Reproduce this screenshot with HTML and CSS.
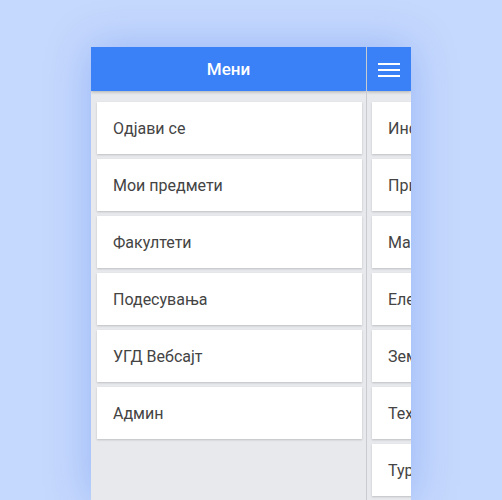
FILE: index.html
```html
<!DOCTYPE html>
<html lang="mk">
<head>
<meta charset="utf-8">
<link rel="stylesheet" href="styles.css">
</head>
<body>
<div class="frame">
  <div class="pane pane-left">
    <div class="header"><span class="title">Мени</span></div>
    <div class="list">
      <div class="card">Одјави се</div>
      <div class="card">Мои предмети</div>
      <div class="card">Факултети</div>
      <div class="card">Подесувања</div>
      <div class="card">УГД Вебсајт</div>
      <div class="card">Админ</div>
    </div>
  </div>
  <div class="pane pane-right">
    <div class="header header-right">
      <svg class="burger" width="22" height="14" viewBox="0 0 22 14"><rect x="0" y="0" width="22" height="2" fill="#fff"/><rect x="0" y="6" width="22" height="2" fill="#fff"/><rect x="0" y="12" width="22" height="2" fill="#fff"/></svg>
    </div>
    <div class="list list-right">
      <div class="card">Информатика</div>
      <div class="card">Природни науки</div>
      <div class="card">Машински</div>
      <div class="card">Електротехника</div>
      <div class="card">Земјоделство</div>
      <div class="card">Технологија</div>
      <div class="card">Туризам</div>
    </div>
  </div>
</div>
</body>
</html>
```
FILE: styles.css
```css
html, body {
  margin: 0;
  padding: 0;
}
body {
  background: #c5d8fd;
  font-family: Roboto, "Noto Sans", sans-serif;
  height: 500px;
  overflow: hidden;
  padding-top: 47px;
  box-sizing: border-box;
}
.frame {
  width: 320px;
  height: 453px;
  margin: 0 auto;
  display: flex;
  background: #e8e9ec;
  box-shadow: 0 0 40px rgba(70, 120, 235, 0.35);
}
.pane {
  display: flex;
  flex-direction: column;
  overflow: hidden;
}
.pane-left {
  width: 275px;
  border-right: 1px solid #c9cbd0;
}
.pane-right {
  flex: 1;
}
.header {
  height: 44px;
  background: #3a80f6;
  display: flex;
  align-items: center;
  justify-content: center;
  box-shadow: 0 1px 3px rgba(0, 0, 0, 0.25);
  position: relative;
  z-index: 1;
  flex: none;
}
.pane-left .header {
  border-right: 1px solid #2f6ad0;
  margin-right: -1px;
}
.title {
  color: #fff;
  font-size: 17px;
  font-weight: 500;
}
.burger {
  display: block;
  margin-top: 1px;
  margin-left: -1px;
}
.list {
  display: flex;
  flex-direction: column;
  gap: 5px;
  padding: 11px 4px 0 6px;
}
.list-right {
  padding: 11px 0 0 5px;
  width: 240px;
}
.card {
  height: 52px;
  flex: none;
  background: #fff;
  box-shadow: 0 1px 2px rgba(0, 0, 0, 0.18);
  display: flex;
  align-items: center;
  padding-left: 16px;
  font-size: 16px;
  color: #444;
  white-space: nowrap;
}
```
